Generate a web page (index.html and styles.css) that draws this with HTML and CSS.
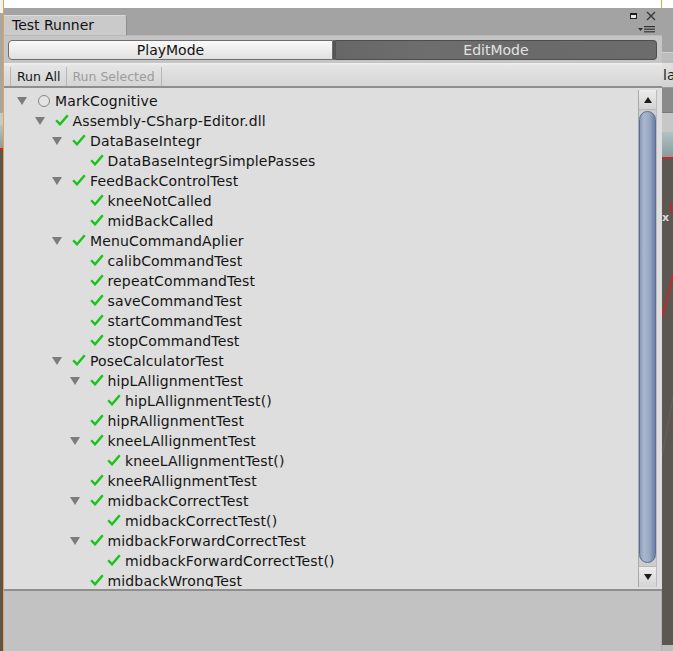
FILE: index.html
```html
<!DOCTYPE html>
<html>
<head>
<meta charset="utf-8">
<title>Test Runner</title>
<link rel="stylesheet" href="styles.css">
</head>
<body>
<div class="screen">
  <div class="edge-left"></div>
  <div class="edge-orange"></div>
  <div class="window">
    <div class="topbar"></div>
    <div class="tabbar">
      <div class="tab">Test Runner</div>
      <div class="win-icons">
        <div class="icon-row">
          <span class="max-icon"></span>
          <svg class="close-icon" width="10" height="10" viewBox="0 0 10 10"><path d="M1 1 L9 9 M9 1 L1 9" stroke="#333" stroke-width="1.2" fill="none"/></svg>
        </div>
        <svg class="menu-icon" width="18" height="7" viewBox="0 0 18 7"><polygon points="0,2 5,2 2.5,5" fill="#333"/><rect x="6" y="0" width="11" height="1.2" fill="#333"/><rect x="6" y="2.6" width="11" height="1.2" fill="#333"/><rect x="6" y="5.2" width="11" height="1.2" fill="#333"/></svg>
      </div>
    </div>
    <div class="modebar">
      <div class="mode play">PlayMode</div>
      <div class="mode edit">EditMode</div>
    </div>
    <div class="toolbar">
      <div class="tbtn first">Run All</div>
      <div class="tbtn disabled">Run Selected</div>
    </div>
    <div class="treearea">
      <div class="tree">
        <div class="row l0"><span class="fold open"></span><span class="icon"><span class="circle"></span></span><span class="label">MarkCognitive</span></div>
        <div class="row l1"><span class="fold open"></span><span class="icon"><svg class="check" width="14" height="12" viewBox="0 0 14 12"><path d="M1.2 6.2 L5 10.3 L12.8 1.2" stroke="#17c417" stroke-width="2.4" fill="none"/></svg></span><span class="label">Assembly-CSharp-Editor.dll</span></div>
        <div class="row l2"><span class="fold open"></span><span class="icon"><svg class="check" width="14" height="12" viewBox="0 0 14 12"><path d="M1.2 6.2 L5 10.3 L12.8 1.2" stroke="#17c417" stroke-width="2.4" fill="none"/></svg></span><span class="label">DataBaseIntegr</span></div>
        <div class="row l3"><span class="fold"></span><span class="icon"><svg class="check" width="14" height="12" viewBox="0 0 14 12"><path d="M1.2 6.2 L5 10.3 L12.8 1.2" stroke="#17c417" stroke-width="2.4" fill="none"/></svg></span><span class="label">DataBaseIntegrSimplePasses</span></div>
        <div class="row l2"><span class="fold open"></span><span class="icon"><svg class="check" width="14" height="12" viewBox="0 0 14 12"><path d="M1.2 6.2 L5 10.3 L12.8 1.2" stroke="#17c417" stroke-width="2.4" fill="none"/></svg></span><span class="label">FeedBackControlTest</span></div>
        <div class="row l3"><span class="fold"></span><span class="icon"><svg class="check" width="14" height="12" viewBox="0 0 14 12"><path d="M1.2 6.2 L5 10.3 L12.8 1.2" stroke="#17c417" stroke-width="2.4" fill="none"/></svg></span><span class="label">kneeNotCalled</span></div>
        <div class="row l3"><span class="fold"></span><span class="icon"><svg class="check" width="14" height="12" viewBox="0 0 14 12"><path d="M1.2 6.2 L5 10.3 L12.8 1.2" stroke="#17c417" stroke-width="2.4" fill="none"/></svg></span><span class="label">midBackCalled</span></div>
        <div class="row l2"><span class="fold open"></span><span class="icon"><svg class="check" width="14" height="12" viewBox="0 0 14 12"><path d="M1.2 6.2 L5 10.3 L12.8 1.2" stroke="#17c417" stroke-width="2.4" fill="none"/></svg></span><span class="label">MenuCommandAplier</span></div>
        <div class="row l3"><span class="fold"></span><span class="icon"><svg class="check" width="14" height="12" viewBox="0 0 14 12"><path d="M1.2 6.2 L5 10.3 L12.8 1.2" stroke="#17c417" stroke-width="2.4" fill="none"/></svg></span><span class="label">calibCommandTest</span></div>
        <div class="row l3"><span class="fold"></span><span class="icon"><svg class="check" width="14" height="12" viewBox="0 0 14 12"><path d="M1.2 6.2 L5 10.3 L12.8 1.2" stroke="#17c417" stroke-width="2.4" fill="none"/></svg></span><span class="label">repeatCommandTest</span></div>
        <div class="row l3"><span class="fold"></span><span class="icon"><svg class="check" width="14" height="12" viewBox="0 0 14 12"><path d="M1.2 6.2 L5 10.3 L12.8 1.2" stroke="#17c417" stroke-width="2.4" fill="none"/></svg></span><span class="label">saveCommandTest</span></div>
        <div class="row l3"><span class="fold"></span><span class="icon"><svg class="check" width="14" height="12" viewBox="0 0 14 12"><path d="M1.2 6.2 L5 10.3 L12.8 1.2" stroke="#17c417" stroke-width="2.4" fill="none"/></svg></span><span class="label">startCommandTest</span></div>
        <div class="row l3"><span class="fold"></span><span class="icon"><svg class="check" width="14" height="12" viewBox="0 0 14 12"><path d="M1.2 6.2 L5 10.3 L12.8 1.2" stroke="#17c417" stroke-width="2.4" fill="none"/></svg></span><span class="label">stopCommandTest</span></div>
        <div class="row l2"><span class="fold open"></span><span class="icon"><svg class="check" width="14" height="12" viewBox="0 0 14 12"><path d="M1.2 6.2 L5 10.3 L12.8 1.2" stroke="#17c417" stroke-width="2.4" fill="none"/></svg></span><span class="label">PoseCalculatorTest</span></div>
        <div class="row l3"><span class="fold open"></span><span class="icon"><svg class="check" width="14" height="12" viewBox="0 0 14 12"><path d="M1.2 6.2 L5 10.3 L12.8 1.2" stroke="#17c417" stroke-width="2.4" fill="none"/></svg></span><span class="label">hipLAllignmentTest</span></div>
        <div class="row l4"><span class="fold"></span><span class="icon"><svg class="check" width="14" height="12" viewBox="0 0 14 12"><path d="M1.2 6.2 L5 10.3 L12.8 1.2" stroke="#17c417" stroke-width="2.4" fill="none"/></svg></span><span class="label">hipLAllignmentTest()</span></div>
        <div class="row l3"><span class="fold"></span><span class="icon"><svg class="check" width="14" height="12" viewBox="0 0 14 12"><path d="M1.2 6.2 L5 10.3 L12.8 1.2" stroke="#17c417" stroke-width="2.4" fill="none"/></svg></span><span class="label">hipRAllignmentTest</span></div>
        <div class="row l3"><span class="fold open"></span><span class="icon"><svg class="check" width="14" height="12" viewBox="0 0 14 12"><path d="M1.2 6.2 L5 10.3 L12.8 1.2" stroke="#17c417" stroke-width="2.4" fill="none"/></svg></span><span class="label">kneeLAllignmentTest</span></div>
        <div class="row l4"><span class="fold"></span><span class="icon"><svg class="check" width="14" height="12" viewBox="0 0 14 12"><path d="M1.2 6.2 L5 10.3 L12.8 1.2" stroke="#17c417" stroke-width="2.4" fill="none"/></svg></span><span class="label">kneeLAllignmentTest()</span></div>
        <div class="row l3"><span class="fold"></span><span class="icon"><svg class="check" width="14" height="12" viewBox="0 0 14 12"><path d="M1.2 6.2 L5 10.3 L12.8 1.2" stroke="#17c417" stroke-width="2.4" fill="none"/></svg></span><span class="label">kneeRAllignmentTest</span></div>
        <div class="row l3"><span class="fold open"></span><span class="icon"><svg class="check" width="14" height="12" viewBox="0 0 14 12"><path d="M1.2 6.2 L5 10.3 L12.8 1.2" stroke="#17c417" stroke-width="2.4" fill="none"/></svg></span><span class="label">midbackCorrectTest</span></div>
        <div class="row l4"><span class="fold"></span><span class="icon"><svg class="check" width="14" height="12" viewBox="0 0 14 12"><path d="M1.2 6.2 L5 10.3 L12.8 1.2" stroke="#17c417" stroke-width="2.4" fill="none"/></svg></span><span class="label">midbackCorrectTest()</span></div>
        <div class="row l3"><span class="fold open"></span><span class="icon"><svg class="check" width="14" height="12" viewBox="0 0 14 12"><path d="M1.2 6.2 L5 10.3 L12.8 1.2" stroke="#17c417" stroke-width="2.4" fill="none"/></svg></span><span class="label">midbackForwardCorrectTest</span></div>
        <div class="row l4"><span class="fold"></span><span class="icon"><svg class="check" width="14" height="12" viewBox="0 0 14 12"><path d="M1.2 6.2 L5 10.3 L12.8 1.2" stroke="#17c417" stroke-width="2.4" fill="none"/></svg></span><span class="label">midbackForwardCorrectTest()</span></div>
        <div class="row l3"><span class="fold"></span><span class="icon"><svg class="check" width="14" height="12" viewBox="0 0 14 12"><path d="M1.2 6.2 L5 10.3 L12.8 1.2" stroke="#17c417" stroke-width="2.4" fill="none"/></svg></span><span class="label">midbackWrongTest</span></div>
      </div>
      <div class="scrollbar">
        <div class="sb-btn up"><span class="arrow-up"></span></div>
        <div class="sb-thumb"></div>
        <div class="sb-gap"></div>
        <div class="sb-btn down"><span class="arrow-down"></span></div>
      </div>
    </div>
    <div class="footer"></div>
  </div>
  <div class="edge-right">
    <div class="er-white"></div>
    <div class="er-tab"></div>
    <div class="er-bar"></div>
    <div class="er-label">la</div>
    <div class="er-dark"></div>
    <div class="er-light"></div>
    <div class="er-sky"></div>
    <div class="er-scene">
      <svg width="11" height="488" viewBox="0 0 11 488">
        <rect x="0" y="0" width="11" height="1.5" fill="#e21c1c"/>
        <path d="M8.5 46 L10 56" stroke="#d81e1e" stroke-width="1.4" fill="none"/>
        <text x="0" y="64" font-family="DejaVu Sans, sans-serif" font-size="11" font-weight="bold" fill="#d8d8d8">x</text>
        <path d="M0 160 L11 118" stroke="#e01c1c" stroke-width="1.4" fill="none"/>
        <path d="M0 300 L11 240" stroke="#67615b" stroke-width="1" fill="none"/>
      </svg>
    </div>
    <div class="er-bottom"></div>
  </div>
</div>
</body>
</html>
```

FILE: styles.css
```css
* { box-sizing: border-box; }
html, body { margin: 0; padding: 0; }
body {
  width: 673px;
  height: 651px;
  overflow: hidden;
  background: #5c554f;
  font-family: "DejaVu Sans", "Liberation Sans", sans-serif;
  color: #161616;
}
.screen { display: flex; width: 673px; height: 651px; }

.edge-left {
  width: 3px;
  background: linear-gradient(to bottom,
    #f2f2f2 0, #f2f2f2 13px,
    #a6a6a6 13px, #a6a6a6 113px,
    #c9c9c9 113px, #c9c9c9 125px,
    #b7c3c5 125px, #8c9b9d 148px,
    #d8241c 148px, #d8241c 150px,
    #5c554f 150px);
}
.edge-orange { width: 1px; background: #eba33e; }

.window { width: 658px; display: flex; flex-direction: column; }
.topbar { height: 8px; background: #ffffff; border-right: 1px solid #eba33e; }

.tabbar {
  height: 27px;
  background: #a3a3a3;
  display: flex;
  justify-content: space-between;
  align-items: flex-start;
}
.tab {
  margin-top: 7px;
  width: 123px;
  height: 20px;
  background: #cacaca;
  border-top: 1px solid #dadada;
  border-right: 1px solid #8f8f8f;
  border-top-right-radius: 3px;
  padding-left: 8px;
  font-size: 14px;
  line-height: 19px;
  color: #111;
}
.win-icons {
  display: flex;
  flex-direction: column;
  align-items: flex-end;
  padding-right: 6px;
  padding-top: 3px;
}
.icon-row { display: flex; align-items: center; gap: 9px; height: 10px; }
.max-icon {
  display: block;
  width: 7px;
  height: 6px;
  border: 1px solid #1e1e1e;
  border-top-width: 2px;
  background: #e6e6e6;
}
.close-icon { display: block; }
.menu-icon { display: block; margin-top: 5px; }

.modebar {
  height: 28px;
  background: #c5c5c5;
  border-top: 1px solid #b9b9b9;
  padding: 4px 5px 3px 4px;
  display: flex;
}
.mode {
  height: 20px;
  font-size: 14px;
  line-height: 18px;
  text-align: center;
}
.mode.play {
  width: 325px;
  border: 1px solid #6d6d6d;
  border-radius: 4px 0 0 4px;
  background: linear-gradient(to bottom, #fafafa, #e0e0e0);
  color: #111;
}
.mode.edit {
  flex: 1;
  border: 1px solid #4e4e4e;
  border-left: 3px solid #555;
  border-radius: 0 4px 4px 0;
  background: linear-gradient(to right, #676767, #6e6e6e 30%, #6a6a6a 60%, #6c6c6c);
  color: #e2e2e2;
}

.toolbar {
  height: 25px;
  background: linear-gradient(to bottom, #f0f0f0 0, #e4e4e4 3px, #d5d5d5);
  border-bottom: 2px solid #8e8e8e;
  padding: 4px 0 0 6px;
  display: flex;
  align-items: flex-start;
}
.tbtn {
  height: 19px;
  font-size: 12.5px;
  line-height: 19px;
  padding: 0 6px;
  border-right: 1px solid #b6b6b6;
  color: #141414;
}
.tbtn.first { border-left: 1px solid #b6b6b6; }
.tbtn.disabled { color: #9c9c9c; padding-left: 5px; }

.treearea {
  height: 503px;
  background: #dedede;
  border-bottom: 2px solid #8f8f8f;
  display: flex;
  align-items: flex-start;
}
.tree {
  flex: 1;
  height: 499px;
  padding-top: 2px;
  overflow: hidden;
}
.row {
  height: 20px;
  display: flex;
  align-items: center;
  white-space: nowrap;
}
.l0 { padding-left: 11px; }
.l1 { padding-left: 28.5px; }
.l2 { padding-left: 46px; }
.l3 { padding-left: 63.5px; }
.l4 { padding-left: 81px; }
.fold { width: 22px; height: 20px; display: flex; align-items: center; padding-left: 2px; padding-top: 1px; flex: none; }
.fold.open::before {
  content: "";
  display: block;
  width: 0;
  height: 0;
  border-left: 5px solid transparent;
  border-right: 5px solid transparent;
  border-top: 8px solid #7c7c7c;
}
.icon { width: 18px; height: 20px; display: flex; align-items: center; flex: none; }
.circle {
  display: block;
  width: 12px;
  height: 12px;
  margin-left: 1px;
  margin-top: 1px;
  border: 1px solid #858585;
  border-radius: 50%;
  background: #e4e4e4;
}
.check { display: block; margin-left: 0; }
.label { font-size: 14px; line-height: 20px; padding-top: 1px; color: #141414; letter-spacing: 0.15px; }

.scrollbar {
  margin-top: 2px;
  margin-right: 5px;
  width: 19px;
  height: 497px;
  background: #cdcdcd;
  border-left: 1px solid #a8a8a8;
  border-right: 1px solid #bcbcbc;
  display: flex;
  flex-direction: column;
}
.sb-btn {
  display: flex;
  align-items: center;
  justify-content: center;
  background: linear-gradient(to bottom, #ececec, #d3d3d3);
}
.sb-btn.up { height: 20px; border-bottom: 1px solid #b8b8b8; }
.sb-btn.down { height: 21px; border-top: 1px solid #b8b8b8; }
.arrow-up {
  width: 0; height: 0;
  border-left: 4px solid transparent;
  border-right: 4px solid transparent;
  border-bottom: 6px solid #1c1c1c;
}
.arrow-down {
  width: 0; height: 0;
  border-left: 4px solid transparent;
  border-right: 4px solid transparent;
  border-top: 6px solid #1c1c1c;
}
.sb-thumb {
  height: 452px;
  margin-top: 1px;
  border: 1px solid #5b6e91;
  border-radius: 9px;
  background: linear-gradient(to right, #8899b7 0%, #a9b7ce 25%, #9aabc5 60%, #6b7fa2 100%);
}
.sb-gap { flex: 1; }

.footer { flex: 1; background: #c2c2c2; border-right: 1px solid #b0b0b0; }

.edge-right { width: 11px; display: flex; flex-direction: column; }
.er-white { height: 8px; background: #fff; }
.er-tab { height: 44px; background: #a3a3a3; }
.er-bar { height: 11px; background: #bdbdbd; border-top: 1px solid #d0d0d0; }
.er-label {
  height: 25px;
  background: linear-gradient(to bottom, #e2e2e2, #d2d2d2);
  border-bottom: 1px solid #9a9a9a;
  font-size: 14px;
  line-height: 25px;
  padding-left: 1px;
  color: #1c1c1c;
  overflow: hidden;
}
.er-dark { height: 25px; background: #8a8a8a; border-bottom: 1px solid #7a7a7a; }
.er-light { height: 19px; background: #c7c7c7; }
.er-sky { height: 25px; background: linear-gradient(to bottom, #b0c2c4, #8b9b9d); }
.er-scene { flex: 1; background: #5d5751; overflow: hidden; }
.er-scene svg { display: block; }
.er-bottom { height: 6px; background: #bdbdbd; }
```
